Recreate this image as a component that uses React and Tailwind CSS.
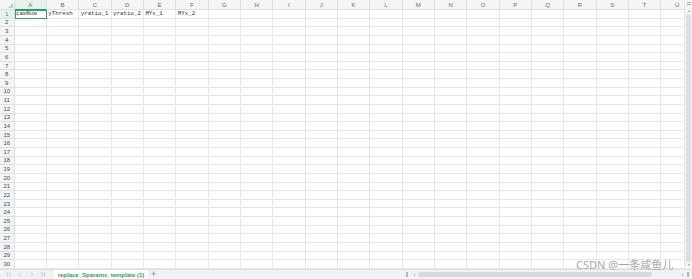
const COLS = 'ABCDEFGHIJKLMNOPQRSTU'.split('');
const ROWS = Array.from({ length: 30 }, (_, i) => i + 1);
const DATA = ['camNum', 'yThresh', 'yratio_1', 'yratio_2', 'MYx_1', 'MYx_2'];

function NavIcon({ d }) {
    return (
        <svg width="7" height="7" viewBox="0 0 8 8" className="text-[#b8bcc2]">
            <path d={d} fill="none" stroke="currentColor" strokeWidth="0.9" />
        </svg>
    );
}

export default function App() {
    return (
        <div className="relative w-[692px] h-[279px] overflow-hidden bg-white flex flex-col font-['Liberation_Sans',sans-serif]">
            <div className="flex h-[269px]">
                <div
                    className="grid overflow-hidden flex-1"
                    style={{ gridTemplateColumns: '14.5px repeat(21, 32.35px)', gridTemplateRows: '10px repeat(30, 8.63px)' }}
                >
                    <div className="bg-[#f4f5f7] border-r border-b border-[#d9dce1] flex items-end justify-end p-[1px]">
                        <div className="w-0 h-0 border-l-[5px] border-l-transparent border-b-[5px] border-b-[#c5c8cd]" />
                    </div>
                    {COLS.map((c, i) => (
                        <div
                            key={c}
                            className={`border-r border-b border-[#dcdfe4] flex items-center justify-center text-[6px] leading-none ${i === 0 ? 'bg-[#e8f2ed] text-[#2a9d63] border-b-[#2a9d63]' : 'bg-[#f4f5f7] text-[#666a70]'}`}
                        >
                            {c}
                        </div>
                    ))}
                    {ROWS.map((r) => (
                        <div key={r} className="contents">
                            <div
                                className={`border-r border-b border-[#dcdfe4] flex items-center justify-center text-[6px] leading-none ${r === 1 ? 'bg-[#e8f2ed] text-[#2a9d63]' : 'bg-[#f4f5f7] text-[#474b51]'}`}
                            >
                                {r}
                            </div>
                            {COLS.map((c, i) => {
                                const sel = r === 1 && i === 0;
                                return (
                                    <div
                                        key={c}
                                        className={`border-r border-b border-[#e3e6ec] flex items-center overflow-hidden whitespace-nowrap text-[5.8px] leading-none text-[#333] font-['Liberation_Mono',monospace] ${sel ? 'outline outline-[1.5px] outline-[#2fa36a] -outline-offset-1 z-10' : ''}`}
                                    >
                                        {r === 1 && DATA[i] ? <span className="pl-[1.5px]">{DATA[i]}</span> : null}
                                    </div>
                                );
                            })}
                        </div>
                    ))}
                </div>
                <div className="w-[8px] bg-[#f3f4f6] border-l border-[#e2e4e8] flex flex-col items-center pt-[2px] pb-[3px] gap-[2px]">
                    <div className="flex flex-col gap-[1px]">
                        <div className="w-[4px] h-[0.8px] bg-[#a9adb3]" />
                        <div className="w-[4px] h-[0.8px] bg-[#a9adb3]" />
                    </div>
                    <div className="w-0 h-0 border-l-[1.5px] border-r-[1.5px] border-b-[2px] border-l-transparent border-r-transparent border-b-[#9aa0a6] mt-[3px]" />
                    <div className="w-[5px] flex-1 rounded-full bg-[#dcdee2]" />
                    <div className="w-0 h-0 border-l-[1.5px] border-r-[1.5px] border-t-[2px] border-l-transparent border-r-transparent border-t-[#9aa0a6]" />
                </div>
            </div>
            <div className="h-[10px] bg-[#f1f2f4] border-t border-[#dcdfe4] flex items-center">
                <div className="flex items-center gap-[4px] pl-[6px] w-[54px]">
                    <NavIcon d="M1.5 1.5V6.5M6 1.5L3 4L6 6.5" />
                    <NavIcon d="M5 1.5L2.5 4L5 6.5" />
                    <NavIcon d="M3 1.5L5.5 4L3 6.5" />
                    <NavIcon d="M2 1.5L5 4L2 6.5M6.5 1.5V6.5" />
                </div>
                <div className="h-full w-[94px] bg-white flex items-center justify-center text-[6px] font-bold text-[#1fa35e] leading-none">
                    replace_Sparams_template (1)
                </div>
                <div className="ml-[3px] text-[9px] leading-none text-[#7a7f86]">+</div>
                <div className="flex-1" />
                <div className="flex items-center gap-[5px] mr-[3px]">
                    <div className="w-[2px] h-[5px] border-x border-[#b4b8be]" />
                    <div className="w-0 h-0 border-t-[1.5px] border-b-[1.5px] border-r-[2px] border-t-transparent border-b-transparent border-r-[#a7abb1]" />
                </div>
                <div className="w-[264px] h-full flex items-center">
                    <div className="w-[234px] h-[5px] rounded-full bg-[#d6d8dc]" />
                </div>
                <div className="flex items-center gap-[3px] mr-[3px]">
                    <div className="w-0 h-0 border-t-[1.5px] border-b-[1.5px] border-l-[2px] border-t-transparent border-b-transparent border-l-[#a7abb1]" />
                    <div className="w-[2px] h-[5px] border-x border-[#b4b8be]" />
                </div>
            </div>
            <div className="absolute left-[576px] top-[259px] text-[11px] leading-none text-[#a8a8a8] whitespace-nowrap font-['Noto_Sans','Noto_Sans_CJK_SC',sans-serif] [text-shadow:0_0_1px_#ffffff,0_0_1px_#ffffff]">
                CSDN @一条咸鱼儿
            </div>
        </div>
    );
}
